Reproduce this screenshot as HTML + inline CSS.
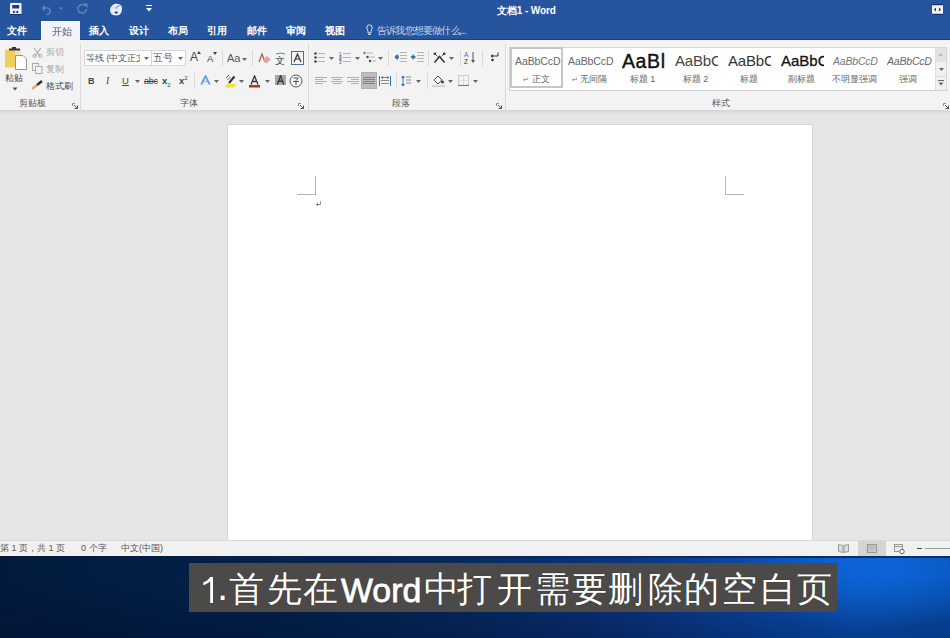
<!DOCTYPE html>
<html><head><meta charset="utf-8">
<style>
*{margin:0;padding:0;box-sizing:border-box}
html,body{width:950px;height:638px;overflow:hidden;background:#e6e6e6;font-family:"Liberation Sans",sans-serif}
.a{position:absolute}
#title{left:0;top:0;width:950px;height:40px;background:#27559d}
#ribbon{left:0;top:40px;width:950px;height:71px;background:#f3f3f3;border-bottom:1px solid #d5d5d5}
#docarea{left:0;top:111px;width:950px;height:429px;background:linear-gradient(180deg,#d9d9d9 0px,#e4e4e4 3px,#e6e6e6 6px)}
#page{left:227px;top:124px;width:586px;height:416px;background:#fff;border-left:1px solid #d8d8d8;border-top:1px solid #d8d8d8;border-right:1px solid #d8d8d8}
#status{left:0;top:540px;width:950px;height:16px;background:#f1f1f1;border-top:1px solid #d8d8d8}
#desk{left:0;top:557px;width:950px;height:81px;background:radial-gradient(ellipse 150px 60px at 880px 8px,rgba(14,105,225,0.8),rgba(14,105,225,0) 100%),linear-gradient(180deg,rgba(0,0,0,0) 25%,rgba(0,12,45,0.35) 100%),linear-gradient(90deg,#021b3d 0%,#03224c 30%,#062a5e 48%,#0a3580 65%,#0a4aa8 80%,#0a58c2 90%,#0851b2 100%)}
#sub{left:189px;top:563px;width:648px;height:49px;background:#4b4a48}
#subt{left:0;top:563px;width:950px;height:49px}
.ch{top:0;color:#fff;font-size:36px;line-height:49px;white-space:nowrap;text-shadow:0 0 1px rgba(0,0,0,0.6)}
.cj{font-size:34.5px;top:2px}
.wt{color:#fff;font-size:12px;white-space:nowrap}
.lbl{color:#444;font-size:10px;white-space:nowrap}
.tab{top:24px;font-size:10px;line-height:13px;font-weight:bold}
.rb{font-size:9px;line-height:12px;color:#444;white-space:nowrap}
.dis{color:#a8a8a8}
.lab{color:#555;font-size:9px}
.sty{color:#444;white-space:nowrap;line-height:1.2}
.sty2{font-size:9px;color:#666;white-space:nowrap;line-height:12px}
.ret{font-size:7px;color:#777}
.st{top:2px;font-size:9px;line-height:10px;color:#555;white-space:nowrap}
.sep{width:1px;background:#dadada}
</style></head><body>

<div id="title" class="a">
 <svg class="a" style="left:10px;top:3px" width="12" height="12" viewBox="0 0 12 12"><rect x="0" y="0" width="11.5" height="11.5" rx="0.8" fill="#eef3fc"/><rect x="2.2" y="2" width="7" height="3.5" fill="#1d3d78"/><rect x="3" y="7.5" width="5.5" height="2.5" fill="#c8d4ea"/><rect x="3" y="8" width="1.6" height="2" fill="#13306a"/><rect x="6.5" y="8" width="1.6" height="2" fill="#13306a"/><rect x="0" y="11" width="11.5" height="1" fill="#14306a"/></svg>
 <svg class="a" style="left:41px;top:4px" width="24" height="11" viewBox="0 0 24 11"><path d="M2 4 H7 A3.5 3.5 0 0 1 7 10.5 H5" stroke="#5d80b8" stroke-width="1.6" fill="none"/><path d="M0.5 4 L4 0.5 V7.5 Z" fill="#5d80b8"/><path d="M18 3.5 L22 3.5 L20 6 Z" fill="#5d80b8"/></svg>
 <svg class="a" style="left:76px;top:3px" width="12" height="12" viewBox="0 0 12 12"><path d="M9.5 3 A4.3 4.3 0 1 0 10.5 6" stroke="#5d80b8" stroke-width="1.6" fill="none"/><path d="M7 0.5 L11.5 0.5 L11.5 5 Z" fill="#5d80b8"/></svg>
 <svg class="a" style="left:109px;top:3px" width="14" height="13" viewBox="0 0 14 13"><path d="M3 2.5 C5 0.5 9 0.3 11.5 2 C13.5 3.5 13.3 7 12.5 9 C11.5 11.5 10 12.5 7 12.5 C4 12.5 2.5 11.5 1.5 9.5 C0.5 7.5 1 4.5 3 2.5 Z" fill="#e6ecf8"/><path d="M7 4.5 L10.5 2.5" stroke="#7d95c8" stroke-width="1.2"/><path d="M4.5 5 C6 4 7.5 5.5 9 6.5" stroke="#b0c0e0" stroke-width="1" fill="none"/><ellipse cx="7.2" cy="9.5" rx="1.6" ry="0.9" fill="#13306e"/></svg>
 <svg class="a" style="left:146px;top:5px" width="6" height="7" viewBox="0 0 6 7"><rect x="0" y="0" width="6" height="1" fill="#fff"/><path d="M0 3 H6 L3 6.5 Z" fill="#fff"/></svg>
 <div class="a wt" style="left:497px;top:4px;font-size:10px;font-weight:bold;letter-spacing:-0.1px">文档1 - Word</div>
 <svg class="a" style="left:932px;top:4px" width="11" height="11" viewBox="0 0 11 11"><rect x="0" y="0" width="11" height="11" fill="#eef3fb"/><rect x="0" y="0" width="11" height="1.2" fill="#14307a"/><rect x="0" y="9.8" width="11" height="1.2" fill="#14307a"/><path d="M2 5.5 L4 3.5 V7.5 Z M9 5.5 L7 3.5 V7.5 Z" fill="#333"/></svg>
 <div class="a" style="left:0;top:39px;width:950px;height:1px;background:#1a3f7a"></div>
 <div class="a" style="left:41px;top:21px;width:39px;height:20px;background:#f3f4f7"></div>
 <div class="a wt tab" style="left:7px">文件</div>
 <div class="a wt tab" style="left:52px;top:25px;color:#3d5a86;font-weight:normal;font-size:9.5px">开始</div>
 <div class="a wt tab" style="left:89px">插入</div>
 <div class="a wt tab" style="left:129px">设计</div>
 <div class="a wt tab" style="left:168px">布局</div>
 <div class="a wt tab" style="left:207px">引用</div>
 <div class="a wt tab" style="left:247px">邮件</div>
 <div class="a wt tab" style="left:286px">审阅</div>
 <div class="a wt tab" style="left:325px">视图</div>
 <svg class="a" style="left:366px;top:24px" width="7" height="12" viewBox="0 0 7 12"><path d="M3.5 0.8 A2.8 2.8 0 0 1 6.2 3.6 C6.2 5.2 5 6 5 7.5 V9 H2 V7.5 C2 6 0.8 5.2 0.8 3.6 A2.8 2.8 0 0 1 3.5 0.8 Z" stroke="#dfe7f3" stroke-width="1" fill="none"/><path d="M2.3 10.5 H4.7" stroke="#dfe7f3" stroke-width="1"/></svg>
 <div class="a wt tab" style="left:377px;color:#c9d5ea;font-weight:normal;letter-spacing:-0.8px">告诉我您想要做什么...</div>
</div>


<div id="ribbon" class="a">
 <!-- clipboard group (coords relative to ribbon top=40) -->
 <svg class="a" style="left:4px;top:7px" width="24" height="24" viewBox="0 0 24 24">
  <rect x="1" y="2" width="16" height="19" fill="#eee3c4"/>
  <rect x="1" y="3" width="10" height="17" fill="#f1cd5c"/>
  <path d="M5 3.5 H16 V1.5 H12 V0 H8 V1.5 H5 Z" fill="#3b3232"/>
  <path d="M11.5 8.5 H19 L22.5 12 V22.5 H11.5 Z" fill="#fff" stroke="#8a8a8a" stroke-width="0.9"/>
 </svg>
 <div class="a rb" style="left:5px;top:32px;font-size:9px">粘贴</div>
 <svg class="a" style="left:12px;top:47px" width="6" height="4" viewBox="0 0 6 4"><path d="M0.5 0.5 H5.5 L3 3.5 Z" fill="#555"/></svg>
 <svg class="a" style="left:32px;top:7px" width="11" height="11" viewBox="0 0 11 11"><path d="M2 1 L8 9 M9 1 L3 9" stroke="#aaa" stroke-width="1.1" fill="none"/><circle cx="2.5" cy="9" r="1.6" stroke="#aaa" fill="none"/><circle cx="8.5" cy="9" r="1.6" stroke="#aaa" fill="none"/></svg>
 <div class="a rb dis" style="left:46px;top:6px">剪切</div>
 <svg class="a" style="left:32px;top:23px" width="11" height="11" viewBox="0 0 11 11"><rect x="0.5" y="0.5" width="6" height="7" fill="none" stroke="#aaa"/><rect x="3.5" y="3.5" width="6.5" height="7" fill="#f3f3f3" stroke="#aaa"/></svg>
 <div class="a rb dis" style="left:46px;top:23px">复制</div>
 <svg class="a" style="left:31px;top:40px" width="13" height="10" viewBox="0 0 13 10"><path d="M1 9 L6 5" stroke="#e0b060" stroke-width="2.5"/><path d="M6 5 L11 1" stroke="#333" stroke-width="2.5"/></svg>
 <div class="a rb" style="left:46px;top:40px">格式刷</div>
 <div class="a rb lab" style="left:19px;top:57px">剪贴板</div>
 <svg class="a launch" style="left:72px;top:63px" width="6" height="6" viewBox="0 0 6 6"><path d="M0.5 0.5 H3 M0.5 0.5 V3" stroke="#777" stroke-width="0.8" fill="none"/><path d="M2 2 L5.5 5.5 M5.5 2.5 V5.5 H2.5" stroke="#555" stroke-width="1" fill="none"/></svg>
 <div class="a sep" style="left:80px;top:4px;height:66px"></div>
 <!-- font group -->
 <div class="a" style="left:84px;top:10px;width:68px;height:16px;background:#fff;border:1px solid #d6d6d6"></div>
 <div class="a" style="left:151px;top:10px;width:35px;height:16px;background:#fff;border:1px solid #d6d6d6"></div>
 <div class="a rb" style="left:86px;top:12px;width:54px;overflow:hidden;color:#555;font-size:9px">等线 (中文正文)</div>
 <svg class="a" style="left:144px;top:17px" width="5" height="3" viewBox="0 0 5 3"><path d="M0 0 H5 L2.5 3 Z" fill="#666"/></svg>
 <div class="a rb" style="left:153px;top:12px;color:#555;font-size:9.5px">五号</div>
 <svg class="a" style="left:178px;top:17px" width="5" height="3" viewBox="0 0 5 3"><path d="M0 0 H5 L2.5 3 Z" fill="#666"/></svg>
 <div class="a" style="left:190px;top:10px;font-size:12px;color:#444">A</div>
 <svg class="a" style="left:197px;top:11px" width="4" height="3" viewBox="0 0 4 3"><path d="M0 3 L2 0 L4 3 Z" fill="#444"/></svg>
 <div class="a" style="left:207px;top:13px;font-size:9.5px;color:#444">A</div>
 <svg class="a" style="left:213px;top:12px" width="4" height="3" viewBox="0 0 4 3"><path d="M0 0 H4 L2 3 Z" fill="#444"/></svg>
 <div class="a sep" style="left:222px;top:10px;height:16px"></div>
 <div class="a" style="left:227px;top:12px;font-size:11px;color:#555">Aa</div>
 <svg class="a" style="left:242px;top:18px" width="5" height="3" viewBox="0 0 5 3"><path d="M0 0 H5 L2.5 3 Z" fill="#666"/></svg>
 <div class="a sep" style="left:252px;top:10px;height:16px"></div>
 <svg class="a" style="left:258px;top:12px" width="13" height="12" viewBox="0 0 13 12"><path d="M1 10 L4 2 L7 10" stroke="#c0504d" stroke-width="1.3" fill="none"/><path d="M5 8 L9 4 L12.5 7.5 L8.5 11.5 Z" fill="#e8a0a0"/></svg>
 <svg class="a" style="left:274px;top:12px" width="13" height="13" viewBox="0 0 13 13"><text x="1" y="12" font-size="10" fill="#333" font-family="Liberation Sans">文</text><path d="M2 2 Q6 0 11 2" stroke="#3c8fcf" stroke-width="1" fill="none"/></svg>
 <svg class="a" style="left:291px;top:11px" width="13" height="14" viewBox="0 0 13 14"><rect x="0.5" y="0.5" width="12" height="13" fill="none" stroke="#4a6fa0"/><path d="M3 11 L6.5 3 L10 11 M4.3 8 H8.7" stroke="#333" stroke-width="1.2" fill="none"/></svg>
 <!-- row2 -->
 <div class="a" style="left:88px;top:36px;font-size:9px;font-weight:bold;color:#444">B</div>
 <div class="a" style="left:106px;top:36px;font-size:9.5px;font-style:italic;font-family:'Liberation Serif',serif;color:#444">I</div>
 <div class="a" style="left:122px;top:35px;font-size:9.5px;text-decoration:underline;color:#444">U</div>
 <svg class="a" style="left:135px;top:40px" width="5" height="3" viewBox="0 0 5 3"><path d="M0 0 H5 L2.5 3 Z" fill="#666"/></svg>
 <div class="a" style="left:144px;top:36px;font-size:9px;text-decoration:line-through;color:#444;letter-spacing:-0.3px">abc</div>
 <div class="a" style="left:162px;top:35px;font-size:9.5px;font-weight:bold;color:#444">x<sub style="font-size:6px;font-weight:normal">2</sub></div>
 <div class="a" style="left:179px;top:35px;font-size:9.5px;font-weight:bold;color:#444">x<sup style="font-size:6px;font-weight:normal">2</sup></div>
 <div class="a sep" style="left:194px;top:33px;height:16px"></div>
 <svg class="a" style="left:200px;top:35px" width="11" height="10" viewBox="0 0 11 10"><path d="M1.2 9.5 L5.5 0.8 L9.8 9.5 Z" fill="#d6e6f6"/><path d="M1.2 9.5 L5.5 0.8 L9.8 9.5 M3.2 6.3 H7.8" stroke="#6b9fd3" stroke-width="1.7" fill="none"/><path d="M4 9.5 L5.5 5 L7 9.5" stroke="#fff" stroke-width="0.8" fill="none"/></svg>
 <svg class="a" style="left:214px;top:40px" width="5" height="3" viewBox="0 0 5 3"><path d="M0 0 H5 L2.5 3 Z" fill="#666"/></svg>
 <svg class="a" style="left:224px;top:34px" width="13" height="14" viewBox="0 0 13 14"><path d="M2 4 L5 1 M3.5 6 L6.5 3" stroke="#555" stroke-width="1"/><path d="M5 9 L10.5 2.5" stroke="#333" stroke-width="2"/><path d="M1 13.5 L2.5 10 H12 L10.5 13.5 Z" fill="#e9e44a"/></svg>
 <svg class="a" style="left:239px;top:40px" width="5" height="3" viewBox="0 0 5 3"><path d="M0 0 H5 L2.5 3 Z" fill="#666"/></svg>
 <svg class="a" style="left:248px;top:35px" width="13" height="13" viewBox="0 0 13 13"><path d="M3 9.5 L6.5 1 L10 9.5 M4.3 6.5 H8.7" stroke="#333" stroke-width="1.3" fill="none"/><rect x="1" y="10" width="11" height="2.5" fill="#c8281c"/></svg>
 <svg class="a" style="left:265px;top:40px" width="5" height="3" viewBox="0 0 5 3"><path d="M0 0 H5 L2.5 3 Z" fill="#666"/></svg>
 <svg class="a" style="left:275px;top:35px" width="11" height="10" viewBox="0 0 11 10"><rect x="0" y="0" width="11" height="10" fill="#a6a6a6"/><path d="M2.3 9.5 L5.5 0.8 L8.7 9.5 M3.5 6.3 H7.5" stroke="#3a3a3a" stroke-width="1.4" fill="none"/></svg>
 <svg class="a" style="left:289px;top:34px" width="14" height="14" viewBox="0 0 14 14"><circle cx="7" cy="7" r="6" fill="none" stroke="#555" stroke-width="1"/><path d="M4.5 4 H9.5 L7 6.5 V11 M4 7.5 H10" stroke="#555" stroke-width="1" fill="none"/></svg>
 <div class="a rb lab" style="left:180px;top:57px">字体</div>
 <svg class="a launch" style="left:298px;top:63px" width="6" height="6" viewBox="0 0 6 6"><path d="M0.5 0.5 H3 M0.5 0.5 V3" stroke="#777" stroke-width="0.8" fill="none"/><path d="M2 2 L5.5 5.5 M5.5 2.5 V5.5 H2.5" stroke="#555" stroke-width="1" fill="none"/></svg>
 <div class="a sep" style="left:308px;top:4px;height:66px"></div>
 <svg class="a" style="left:314px;top:12px" width="11" height="11" viewBox="0 0 11 11"><circle cx="1.5" cy="1.5" r="1.3" fill="#444"/><circle cx="1.5" cy="5.5" r="1.3" fill="#444"/><circle cx="1.5" cy="9.5" r="1.3" fill="#444"/><path d="M4 1.5 H11 M4 5.5 H11 M4 9.5 H11" stroke="#b4b4b4" stroke-width="1"/></svg>
 <svg class="a" style="left:329px;top:17px" width="5" height="3" viewBox="0 0 5 3"><path d="M0 0 H5 L2.5 3 Z" fill="#666"/></svg>
 <svg class="a" style="left:339px;top:11px" width="12" height="13" viewBox="0 0 12 13"><text x="0" y="4.5" font-size="4.5" fill="#444" font-family="Liberation Sans">1</text><text x="0" y="8.5" font-size="4.5" fill="#444" font-family="Liberation Sans">2</text><text x="0" y="12.5" font-size="4.5" fill="#444" font-family="Liberation Sans">3</text><path d="M4 2.5 H12 M4 6.5 H12 M4 10.5 H12" stroke="#b4b4b4" stroke-width="1"/><path d="M0 7 H3" stroke="#3c8fcf" stroke-width="0.8"/></svg>
 <svg class="a" style="left:355px;top:17px" width="5" height="3" viewBox="0 0 5 3"><path d="M0 0 H5 L2.5 3 Z" fill="#666"/></svg>
 <svg class="a" style="left:363px;top:11px" width="13" height="13" viewBox="0 0 13 13"><circle cx="1.5" cy="2" r="1.2" fill="#3c8fcf"/><path d="M3.5 2 H10" stroke="#b4b4b4"/><circle cx="4.5" cy="6" r="1.2" fill="#444"/><path d="M6.5 6 H12" stroke="#b4b4b4"/><circle cx="7" cy="10" r="1.2" fill="#444"/><path d="M9 10 H13" stroke="#b4b4b4"/></svg>
 <svg class="a" style="left:378px;top:17px" width="5" height="3" viewBox="0 0 5 3"><path d="M0 0 H5 L2.5 3 Z" fill="#666"/></svg>
 <div class="a sep" style="left:388px;top:10px;height:16px"></div>
 <svg class="a" style="left:394px;top:12px" width="13" height="11" viewBox="0 0 13 11"><path d="M6 0.5 H13 M6 3.5 H13 M6 6.5 H13 M6 9.5 H13" stroke="#b4b4b4"/><path d="M0.5 5 L4 2 V8 Z" fill="#2e75b6"/><circle cx="3" cy="5" r="2" fill="#2e75b6"/></svg>
 <svg class="a" style="left:411px;top:12px" width="13" height="11" viewBox="0 0 13 11"><path d="M6 0.5 H13 M6 3.5 H13 M6 6.5 H13 M6 9.5 H13" stroke="#b4b4b4"/><path d="M5 5 L1.5 2 V8 Z" fill="#2e75b6"/><path d="M0 5 H3" stroke="#2e75b6" stroke-width="2"/></svg>
 <div class="a sep" style="left:428px;top:10px;height:16px"></div>
 <svg class="a" style="left:433px;top:12px" width="13" height="11" viewBox="0 0 13 11"><path d="M1.5 10.5 L6.5 4.5 L11.5 10.5" stroke="#333" stroke-width="1.5" fill="none"/><path d="M2 2 L4.5 4.5 M11 2 L8.5 4.5" stroke="#555" stroke-width="1"/><circle cx="1.8" cy="1.8" r="1.3" fill="#333"/><circle cx="11.2" cy="1.8" r="1.3" fill="#333"/></svg>
 <svg class="a" style="left:449px;top:17px" width="5" height="3" viewBox="0 0 5 3"><path d="M0 0 H5 L2.5 3 Z" fill="#666"/></svg>
 <div class="a sep" style="left:460px;top:10px;height:16px"></div>
 <svg class="a" style="left:464px;top:11px" width="12" height="13" viewBox="0 0 12 13"><text x="0" y="6" font-size="6.5" fill="#3c6fbf" font-family="Liberation Sans">A</text><text x="0" y="12.5" font-size="6.5" fill="#333" font-family="Liberation Sans">Z</text><path d="M9 1 V11" stroke="#555"/><path d="M7 9 L9 12 L11 9 Z" fill="#555"/></svg>
 <div class="a sep" style="left:482px;top:10px;height:16px"></div>
 <svg class="a" style="left:490px;top:12px" width="9" height="10" viewBox="0 0 9 10"><path d="M8 0.5 V4 H3" stroke="#333" stroke-width="1" fill="none"/><path d="M3 2 L0.5 4 L3 6 Z" fill="#333"/><circle cx="2.5" cy="8" r="1.3" fill="#333"/></svg>
 <svg class="a" style="left:315px;top:37px" width="12" height="9" viewBox="0 0 12 9"><path d="M0 0.5 H12" stroke="#b0b0b0" stroke-width="1"/><path d="M0 2.5 H8" stroke="#b0b0b0" stroke-width="1"/><path d="M0 4.5 H12" stroke="#b0b0b0" stroke-width="1"/><path d="M0 6.5 H8" stroke="#b0b0b0" stroke-width="1"/></svg>
 <svg class="a" style="left:331px;top:37px" width="12" height="9" viewBox="0 0 12 9"><path d="M0 0.5 H12" stroke="#b0b0b0" stroke-width="1"/><path d="M2 2.5 H10" stroke="#b0b0b0" stroke-width="1"/><path d="M0 4.5 H12" stroke="#b0b0b0" stroke-width="1"/><path d="M2 6.5 H10" stroke="#b0b0b0" stroke-width="1"/></svg>
 <svg class="a" style="left:347px;top:37px" width="12" height="9" viewBox="0 0 12 9"><path d="M0 0.5 H12" stroke="#b0b0b0" stroke-width="1"/><path d="M4 2.5 H12" stroke="#b0b0b0" stroke-width="1"/><path d="M0 4.5 H12" stroke="#b0b0b0" stroke-width="1"/><path d="M4 6.5 H12" stroke="#b0b0b0" stroke-width="1"/></svg>
 <div class="a" style="left:361px;top:32px;width:16px;height:17px;background:#bdbdbd;border:1px solid #b0b0b0"></div>
 <svg class="a" style="left:363px;top:37px" width="12" height="9" viewBox="0 0 12 9"><path d="M0 0.5 H12" stroke="#808080" stroke-width="1"/><path d="M0 2.5 H12" stroke="#808080" stroke-width="1"/><path d="M0 4.5 H12" stroke="#808080" stroke-width="1"/><path d="M0 6.5 H12" stroke="#808080" stroke-width="1"/></svg>
 <svg class="a" style="left:379px;top:36px" width="12" height="10" viewBox="0 0 12 10"><path d="M0.5 0 V10 M11.5 0 V10" stroke="#2e75b6"/><path d="M2 1.5 H10 M2 4.5 H10 M2 7.5 H10" stroke="#888"/><path d="M2 1.5 L4 0 V3 Z M10 1.5 L8 0 V3 Z" fill="#2e75b6"/></svg>
 <div class="a sep" style="left:396px;top:33px;height:16px"></div>
 <svg class="a" style="left:401px;top:35px" width="10" height="12" viewBox="0 0 10 12"><path d="M2 1 V11" stroke="#2e75b6"/><path d="M0 3 L2 0.5 L4 3 Z M0 9 L2 11.5 L4 9 Z" fill="#2e75b6"/><path d="M5 2 H10 M5 5 H10 M5 8 H10" stroke="#888"/></svg>
 <svg class="a" style="left:416px;top:40px" width="5" height="3" viewBox="0 0 5 3"><path d="M0 0 H5 L2.5 3 Z" fill="#666"/></svg>
 <div class="a sep" style="left:427px;top:33px;height:16px"></div>
 <svg class="a" style="left:432px;top:34px" width="13" height="13" viewBox="0 0 13 13"><path d="M2 6 L6 2 L10 6 L6 10 Z" fill="#fff" stroke="#444"/><circle cx="10.5" cy="8" r="1.5" fill="#444"/><path d="M0 12 H13" stroke="#b4b4b4"/></svg>
 <svg class="a" style="left:448px;top:40px" width="5" height="3" viewBox="0 0 5 3"><path d="M0 0 H5 L2.5 3 Z" fill="#666"/></svg>
 <svg class="a" style="left:458px;top:35px" width="11" height="11" viewBox="0 0 11 11"><rect x="0.5" y="0.5" width="10" height="10" fill="none" stroke="#ccc"/><path d="M5.5 0.5 V10.5 M0.5 5.5 H10.5" stroke="#ddd"/><path d="M0 10.5 H11" stroke="#777" stroke-width="1.2"/></svg>
 <svg class="a" style="left:473px;top:40px" width="5" height="3" viewBox="0 0 5 3"><path d="M0 0 H5 L2.5 3 Z" fill="#666"/></svg>
 <div class="a rb lab" style="left:392px;top:57px">段落</div>
 <svg class="a launch" style="left:496px;top:63px" width="6" height="6" viewBox="0 0 6 6"><path d="M0.5 0.5 H3 M0.5 0.5 V3" stroke="#777" stroke-width="0.8" fill="none"/><path d="M2 2 L5.5 5.5 M5.5 2.5 V5.5 H2.5" stroke="#555" stroke-width="1" fill="none"/></svg>
 <div class="a sep" style="left:505px;top:4px;height:66px"></div>

 <!-- styles gallery -->
 <div class="a" style="left:509px;top:7px;width:438px;height:44px;background:#fff;border:1px solid #d5d5d5"></div>
 <div class="a" style="left:510px;top:7px;width:53px;height:41px;border:2px solid #c6c6c6"></div>
 <div class="a sty" style="left:515px;width:46px;overflow:hidden;text-align:left;font-size:10.5px;letter-spacing:-0.1px;color:#666;top:15px">AaBbCcD</div>
 <div class="a sty2" style="left:510px;width:53px;text-align:center;top:33px"><span class="ret">↵</span> 正文</div>
 <div class="a sty" style="left:568px;width:46px;overflow:hidden;text-align:left;font-size:10.5px;letter-spacing:-0.1px;color:#666;top:15px">AaBbCcD</div>
 <div class="a sty2" style="left:563px;width:53px;text-align:center;top:33px"><span class="ret">↵</span> 无间隔</div>
 <div class="a sty" style="left:622px;width:43px;overflow:hidden;text-align:left;font-size:19.5px;color:#111;top:10px;letter-spacing:0.6px;-webkit-text-stroke:0.4px #111">AaBl</div>
 <div class="a sty2" style="left:616px;width:53px;text-align:center;top:33px">标题 1</div>
 <div class="a sty" style="left:675px;width:43px;overflow:hidden;text-align:left;font-size:15px;color:#444;top:12px;letter-spacing:-0.2px">AaBbC</div>
 <div class="a sty2" style="left:669px;width:53px;text-align:center;top:33px">标题 2</div>
 <div class="a sty" style="left:728px;width:43px;overflow:hidden;text-align:left;font-size:15px;color:#333;top:12px;letter-spacing:-0.2px">AaBbC</div>
 <div class="a sty2" style="left:722px;width:53px;text-align:center;top:33px">标题</div>
 <div class="a sty" style="left:781px;width:43px;overflow:hidden;text-align:left;font-size:15px;color:#111;-webkit-text-stroke:0.3px #111;letter-spacing:0px;top:12px">AaBbC</div>
 <div class="a sty2" style="left:775px;width:53px;text-align:center;top:33px">副标题</div>
 <div class="a sty" style="left:833px;width:46px;overflow:hidden;text-align:left;font-size:10.5px;font-style:italic;color:#777;letter-spacing:-0.2px;top:15px">AaBbCcD</div>
 <div class="a sty2" style="left:828px;width:53px;text-align:center;top:33px">不明显强调</div>
 <div class="a sty" style="left:887px;width:45px;overflow:hidden;text-align:left;font-size:10.5px;font-style:italic;color:#666;letter-spacing:-0.2px;top:15px">AaBbCcD</div>
 <div class="a sty2" style="left:881px;width:53px;text-align:center;top:33px">强调</div>
 <div class="a" style="left:935px;top:8px;width:11px;height:42px;background:#f0f0f0;border-left:1px solid #e0e0e0"></div>
 <div class="a" style="left:936px;top:8px;width:10px;height:14px;background:#e2e2e2"></div>
 <svg class="a" style="left:938px;top:13px" width="5" height="3" viewBox="0 0 5 3"><path d="M0 3 H5 L2.5 0 Z" fill="#bbb"/></svg>
 <svg class="a" style="left:939px;top:28px" width="5" height="3" viewBox="0 0 5 3"><path d="M0 0 H5 L2.5 3 Z" fill="#666"/></svg>
 <div class="a" style="left:936px;top:36px;width:10px;height:1px;background:#dddddd"></div>
 <svg class="a" style="left:938px;top:40px" width="6" height="6" viewBox="0 0 6 6"><path d="M0 0.5 H6" stroke="#666"/><path d="M0.5 2.5 H5.5 L3 5.5 Z" fill="#666"/></svg>
 <div class="a rb lab" style="left:712px;top:57px">样式</div>
 <svg class="a launch" style="left:943px;top:63px" width="6" height="6" viewBox="0 0 6 6"><path d="M0.5 0.5 H3 M0.5 0.5 V3" stroke="#777" stroke-width="0.8" fill="none"/><path d="M2 2 L5.5 5.5 M5.5 2.5 V5.5 H2.5" stroke="#555" stroke-width="1" fill="none"/></svg>
</div>


<div id="docarea" class="a"></div>
<div id="page" class="a"></div>
<div class="a" style="left:315px;top:176px;width:1px;height:19px;background:#b4b4b4"></div>
<div class="a" style="left:297px;top:194px;width:19px;height:1px;background:#b4b4b4"></div>
<div class="a" style="left:725px;top:176px;width:1px;height:19px;background:#b4b4b4"></div>
<div class="a" style="left:725px;top:194px;width:19px;height:1px;background:#b4b4b4"></div>
<svg class="a" style="left:316px;top:201px" width="5" height="6" viewBox="0 0 5 6"><path d="M4.5 0 V3.5 H1" stroke="#777" stroke-width="0.8" fill="none"/><path d="M0 3.5 L2 2 V5 Z" fill="#555"/></svg>
<div id="status" class="a">
 <div class="a st" style="left:0px">第 1 页，共 1 页</div>
 <div class="a st" style="left:81px">0 个字</div>
 <div class="a st" style="left:121px">中文(中国)</div>
 <svg class="a" style="left:838px;top:3px" width="11" height="9" viewBox="0 0 11 9"><path d="M0.5 0.5 L5 1.5 V8.5 L0.5 7.5 Z M10.5 0.5 L6 1.5 V8.5 L10.5 7.5 Z" fill="#ddd" stroke="#888" stroke-width="0.8"/></svg>
 <div class="a" style="left:858px;top:0px;width:28px;height:15px;background:#d4d4d4"></div>
 <svg class="a" style="left:867px;top:3px" width="10" height="9" viewBox="0 0 10 9"><rect x="0.5" y="0.5" width="9" height="8" fill="#c8c8c8" stroke="#888" stroke-width="0.8"/><path d="M2 3 H8 M2 5 H8" stroke="#aaa" stroke-width="0.8"/></svg>
 <svg class="a" style="left:894px;top:3px" width="11" height="10" viewBox="0 0 11 10"><rect x="0.5" y="0.5" width="8" height="7" fill="#eee" stroke="#888" stroke-width="0.8"/><path d="M0.5 2.5 H8.5" stroke="#888" stroke-width="0.8"/><circle cx="8" cy="7.5" r="2.2" fill="#fff" stroke="#555" stroke-width="0.9"/></svg>
 <div class="a" style="left:917px;top:7px;width:5px;height:1px;background:#444"></div>
 <div class="a" style="left:925px;top:7px;width:25px;height:1px;background:#999"></div>
</div>
<div id="desk" class="a"></div>
<div class="a" style="left:0;top:556px;width:950px;height:2px;background:linear-gradient(90deg,#061838,#0a2a66 70%,#0b2f72)"></div>
<div id="sub" class="a"></div>
<div id="subt" class="a"><svg class="a" style="left:202px;top:13px" width="13" height="28" viewBox="0 0 13 28"><path d="M8.2 1 H11 V27 H8.2 V5.2 C6.5 6.8 4 8.2 1.2 9.2 V6.6 C4.2 5.4 6.7 3.4 8.2 1 Z" fill="#fff"/></svg><span class="a ch" style="left:217px;font-size:40px;line-height:47px">.</span><span class="a ch" style="left:341px;top:3px;font-size:34px;transform:scaleX(0.995);transform-origin:0 0;-webkit-text-stroke:0.8px #fff">Word</span><span class="a ch cj" style="left:228.75px">首</span><span class="a ch cj" style="left:266.75px">先</span><span class="a ch cj" style="left:303.25px">在</span><span class="a ch cj" style="left:423.75px">中</span><span class="a ch cj" style="left:456.75px">打</span><span class="a ch cj" style="left:496.75px">开</span><span class="a ch cj" style="left:534.75px">需</span><span class="a ch cj" style="left:571.75px">要</span><span class="a ch cj" style="left:607.75px">删</span><span class="a ch cj" style="left:647.75px">除</span><span class="a ch cj" style="left:684.25px">的</span><span class="a ch cj" style="left:721.75px">空</span><span class="a ch cj" style="left:760.75px">白</span><span class="a ch cj" style="left:796.75px">页</span></div>
</body></html>
